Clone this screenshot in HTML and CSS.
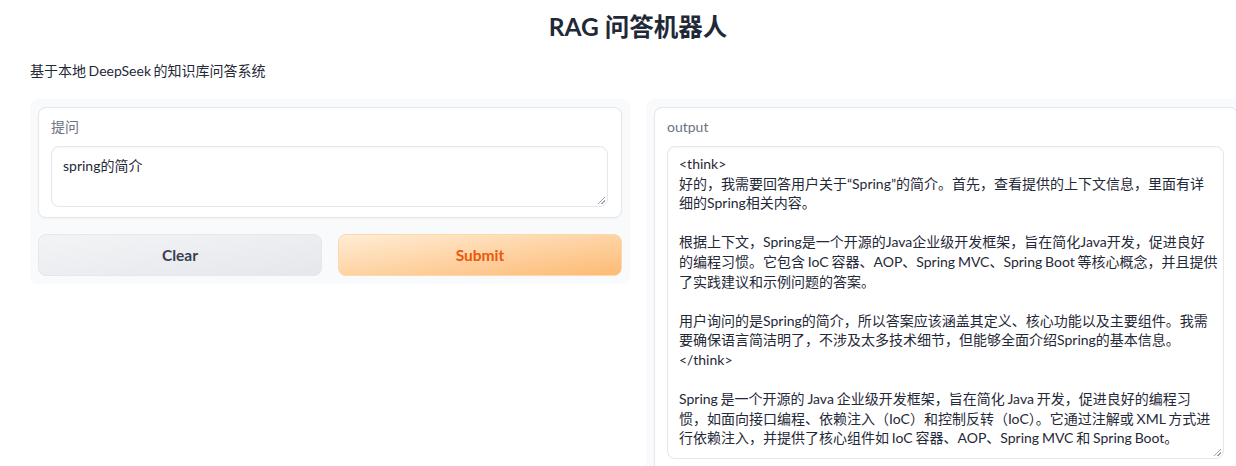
FILE: index.html
```html
<!DOCTYPE html>
<html lang="zh">
<head>
<meta charset="utf-8">
<title>RAG 问答机器人</title>
<link rel="stylesheet" href="styles.css">
</head>
<body>
<div class="app">
  <h1 class="title">RAG 问答机器人</h1>
  <p class="subtitle">基于本地 DeepSeek 的知识库问答系统</p>
  <div class="row">
    <div class="panel panel-left">
      <div class="card">
        <label class="label">提问</label>
        <div class="textbox textbox-input">spring的简介<span class="grip"></span></div>
      </div>
      <div class="buttons">
        <button class="btn btn-secondary">Clear</button>
        <button class="btn btn-primary">Submit</button>
      </div>
    </div>
    <div class="panel panel-right">
      <div class="card card-output">
        <label class="label">output</label>
        <div class="textbox textbox-output">
          <div class="line">&lt;think&gt;</div>
          <div class="line">好的，我需要回答用户关于“Spring”的简介。首先，查看提供的上下文信息，里面有详</div>
          <div class="line">细的Spring相关内容。</div>
          <div class="line blank"></div>
          <div class="line">根据上下文，Spring是一个开源的Java企业级开发框架，旨在简化Java开发，促进良好</div>
          <div class="line">的编程习惯。它包含 IoC 容器、AOP、Spring MVC、Spring Boot 等核心概念，并且提供</div>
          <div class="line">了实践建议和示例问题的答案。</div>
          <div class="line blank"></div>
          <div class="line">用户询问的是Spring的简介，所以答案应该涵盖其定义、核心功能以及主要组件。我需</div>
          <div class="line">要确保语言简洁明了，不涉及太多技术细节，但能够全面介绍Spring的基本信息。</div>
          <div class="line">&lt;/think&gt;</div>
          <div class="line blank"></div>
          <div class="line">Spring 是一个开源的 Java 企业级开发框架，旨在简化 Java 开发，促进良好的编程习</div>
          <div class="line">惯，如面向接口编程、依赖注入（IoC）和控制反转（IoC）。它通过注解或 XML 方式进</div>
          <div class="line">行依赖注入，并提供了核心组件如 IoC 容器、AOP、Spring MVC 和 Spring Boot。</div>
          <span class="grip"></span>
        </div>
      </div>
    </div>
  </div>
</div>
</body>
</html>
```
FILE: styles.css
```css
html, body {
  margin: 0;
  padding: 0;
  background: #ffffff;
  overflow: hidden;
}
body {
  width: 1236px;
  height: 466px;
  font-family: Lato, "Noto Sans CJK SC", sans-serif;
  color: #1f2937;
}
.app {
  width: 1216px;
  padding-left: 30px;
  box-sizing: content-box;
}
.title {
  margin: 0;
  padding-top: 9px;
  height: 36px;
  line-height: 36px;
  text-align: center;
  font-size: 24.5px;
  font-weight: 700;
  color: #1f2937;
}
.subtitle {
  margin: 16px 0 0 0;
  font-size: 14px;
  line-height: 20px;
  color: #1f2937;
  word-spacing: -1px;
}
.row {
  display: flex;
  gap: 16px;
  margin-top: 18px;
  align-items: flex-start;
}
.panel {
  flex: 1 1 0;
  min-width: 0;
  background: #f9fafb;
  border-radius: 8px;
  padding: 8px;
  box-sizing: border-box;
}
.panel-right {
  height: 380px;
}
.card {
  background: #ffffff;
  border: 1px solid #e5e7eb;
  border-radius: 8px;
  padding: 9px 13px 10px 12px;
  box-shadow: 0 1px 2px rgba(0,0,0,0.04);
}
.card-output {
  height: 380px;
}
.label {
  display: block;
  font-size: 14px;
  line-height: 20px;
  color: #6b7280;
  margin-bottom: 9px;
}
.textbox {
  position: relative;
  border: 1px solid #e5e7eb;
  border-radius: 8px;
  background: #ffffff;
  font-size: 14px;
  line-height: 19.6px;
  color: #1f2937;
  padding: 6px 11px;
  box-shadow: 0 1px 2px rgba(0,0,0,0.04) inset;
}
.textbox-input {
  height: 61px;
  box-sizing: border-box;
  padding-top: 9px;
}
.textbox-output {
  height: 313px;
  box-sizing: border-box;
  padding-top: 7px;
  word-spacing: -0.8px;
}
.line {
  white-space: nowrap;
  height: 19.6px;
}
.grip {
  position: absolute;
  right: 2px;
  bottom: 2px;
  width: 7px;
  height: 7px;
  background: linear-gradient(135deg, transparent 45%, #9ca3af 46%, #9ca3af 54%, transparent 55%, transparent 70%, #9ca3af 71%, #9ca3af 79%, transparent 80%);
}
.buttons {
  display: flex;
  gap: 16px;
  margin-top: 16px;
}
.btn {
  flex: 1 1 0;
  height: 42px;
  border-radius: 8px;
  font-family: Lato, "Noto Sans CJK SC", sans-serif;
  font-size: 15.5px;
  font-weight: 700;
  cursor: pointer;
}
.btn-secondary {
  background: linear-gradient(to bottom right, #f3f4f6, #e5e7eb);
  border: 1px solid #e5e7eb;
  color: #374151;
}
.btn-primary {
  background: linear-gradient(to bottom right, #ffedd5, #fdba74);
  border: 1px solid #fed7aa;
  color: #ea580c;
}
```
